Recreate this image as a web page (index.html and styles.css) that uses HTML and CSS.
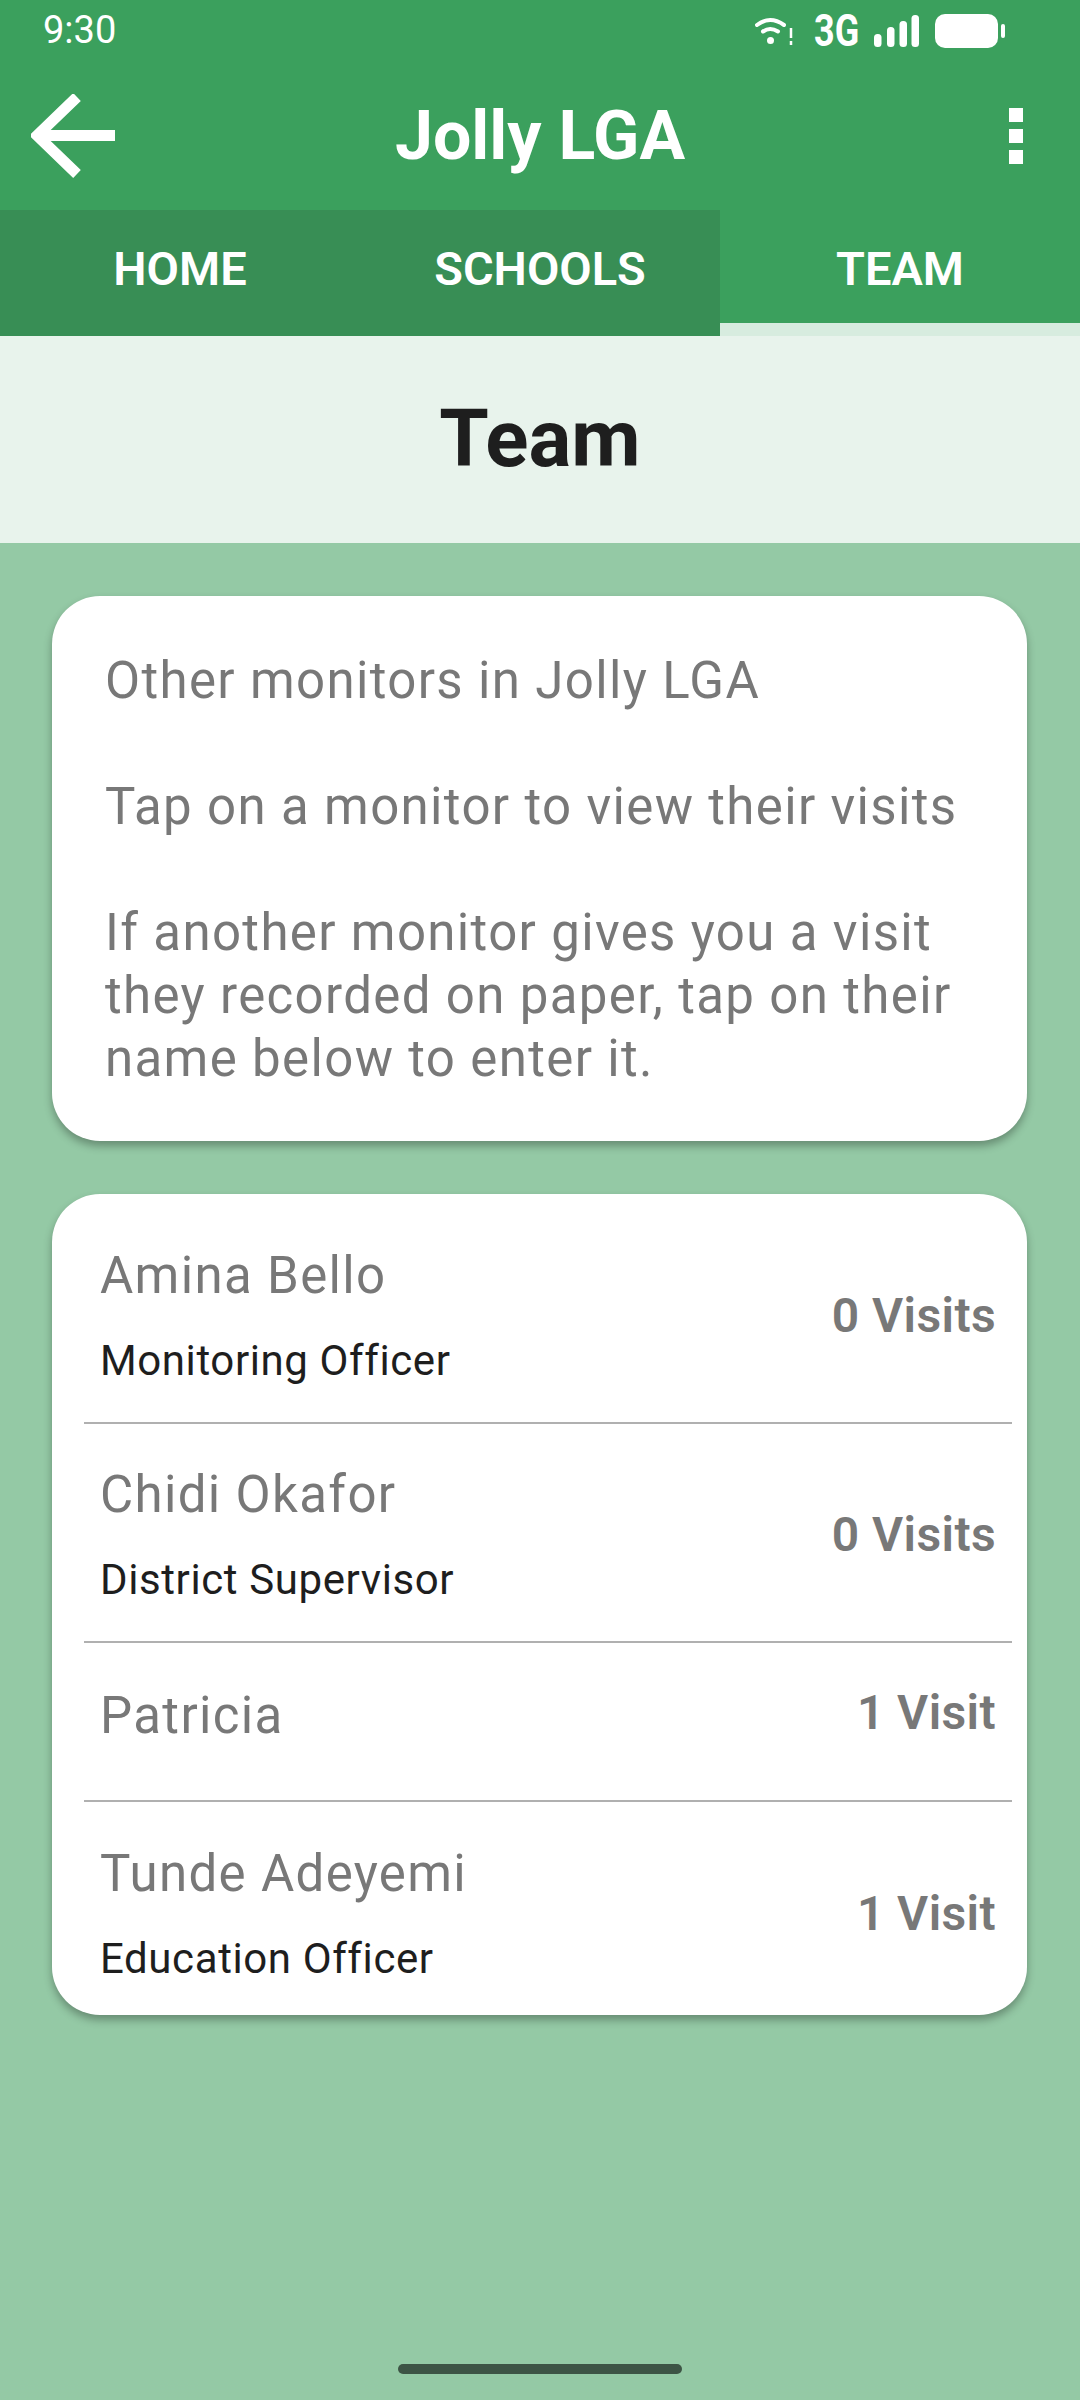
FILE: index.html
```html
<!DOCTYPE html>
<html lang="en">
<head>
    <meta charset="UTF-8">
    <title>Team</title>
    <link rel="stylesheet" href="styles.css">
</head>
<body>
    <div class="header">
        <div class="status-bar">
            <span class="time">9:30</span>
            <div class="status-icons">
                <svg class="wifi" width="38" height="28" viewBox="0 0 38 28">
                    <path d="M2 8 Q15 -2 29 8" fill="none" stroke="#fff" stroke-width="4" stroke-linecap="round"/>
                    <path d="M8 14.500 Q15 9.500 23 14.500" fill="none" stroke="#fff" stroke-width="4" stroke-linecap="round"/>
                    <circle cx="15.500" cy="23.500" r="3.500" fill="#fff"/>
                    <path d="M36 11 V21 M36 24 V28" stroke="#fff" stroke-width="2.500"/>
                </svg>
                <span class="network">3G</span>
                <svg class="signal" width="45" height="32" viewBox="0 0 45 32">
                    <rect x="0" y="19" width="7.500" height="13" rx="3.500" fill="#fff"/>
                    <rect x="13" y="12" width="7.500" height="20" rx="3.500" fill="#fff"/>
                    <rect x="25.500" y="6" width="7.500" height="26" rx="3.500" fill="#fff"/>
                    <rect x="37.500" y="0" width="7.500" height="32" rx="3.500" fill="#fff"/>
                </svg>
                <svg class="battery" width="70" height="34" viewBox="0 0 70 34">
                    <rect x="0" y="0" width="63" height="34" rx="10" fill="#fff"/>
                    <rect x="66" y="10" width="4" height="14" rx="2" fill="#fff"/>
                </svg>
            </div>
        </div>
        <div class="app-bar">
            <svg class="back" width="84" height="84" viewBox="0 0 84 84">
                <path d="M84 41.500 H6 M46 3 L6 41.500 L46 80" fill="none" stroke="#fff" stroke-width="11"/>
            </svg>
            <h1 class="app-title">Jolly LGA</h1>
            <div class="menu">
                <span></span>
                <span></span>
                <span></span>
            </div>
        </div>
        <div class="tabs">
            <div class="tab dim">HOME</div>
            <div class="tab dim">SCHOOLS</div>
            <div class="tab active">TEAM</div>
        </div>
    </div>
    <div class="page-title">Team</div>
    <div class="content">
        <div class="card intro">
            <p>Other monitors in Jolly LGA</p>
            <p>Tap on a monitor to view their visits</p>
            <p>If another monitor gives you a visit they recorded on paper, tap on their name below to enter it.</p>
        </div>
        <div class="card team">
            <div class="row first">
                <div class="person">
                    <div class="name">Amina Bello</div>
                    <div class="role">Monitoring Officer</div>
                </div>
                <div class="visits">0 Visits</div>
            </div>
            <div class="row">
                <div class="person">
                    <div class="name">Chidi Okafor</div>
                    <div class="role">District Supervisor</div>
                </div>
                <div class="visits">0 Visits</div>
            </div>
            <div class="row short">
                <div class="person">
                    <div class="name">Patricia</div>
                </div>
                <div class="visits">1 Visit</div>
            </div>
            <div class="row last">
                <div class="person">
                    <div class="name">Tunde Adeyemi</div>
                    <div class="role">Education Officer</div>
                </div>
                <div class="visits">1 Visit</div>
            </div>
        </div>
        <div class="home-bar"></div>
    </div>
</body>
</html>
```
FILE: styles.css
```css
* {
    padding: 0px;
    margin: 0px;
    box-sizing: border-box;
}
body {
    width: 1080px;
    height: 2400px;
    display: flex;
    flex-direction: column;
    font-family: Roboto, sans-serif;
    overflow: hidden;
}
.header {
    background-color: #3ba05d;
    color: #fff;
}
.status-bar {
    height: 60px;
    padding: 0px 75px 0px 43px;
    display: flex;
    justify-content: space-between;
    align-items: flex-start;
}
.time {
    font-size: 38px;
    line-height: 60px;
}
.status-icons {
    display: flex;
    align-items: center;
    gap: 16px;
    height: 62px;
}
.wifi {
    margin-right: 5px;
}
.network {
    display: inline-block;
    width: 44px;
    font-size: 45px;
    font-weight: 700;
    line-height: 44px;
    transform: scaleX(0.8);
    transform-origin: left center;
}
.app-bar {
    height: 150px;
    padding: 2px 31px 0px 31px;
    display: grid;
    grid-template-columns: 1fr auto 1fr;
    align-items: center;
}
.app-title {
    font-size: 68px;
    font-weight: 700;
    text-align: center;
}
.menu {
    justify-self: end;
    display: flex;
    flex-direction: column;
    gap: 7px;
    margin-right: 26px;
}
.menu span {
    display: block;
    width: 14px;
    height: 14px;
    background-color: #fff;
}
.tabs {
    display: flex;
    height: 126px;
}
.tab {
    width: 360px;
    text-align: center;
    font-size: 47px;
    font-weight: 600;
    line-height: 118px;
}
.tab.dim {
    background-color: #388e55;
}
.tab.active {
    border-bottom: 13px solid #d7ecdf;
}
.page-title {
    height: 207px;
    background-color: #e8f3ec;
    color: #1e1e1e;
    text-align: center;
    font-size: 80px;
    font-weight: 700;
    line-height: 207px;
}
.content {
    flex: 1;
    background-color: #94c9a5;
    padding: 53px 53px 0px 52px;
    position: relative;
}
.card {
    background-color: #fff;
    border-radius: 48px;
    box-shadow: 0px 5px 9px rgba(0, 0, 0, 0.3);
}
.intro {
    height: 545px;
    padding: 53px 50px 0px 53px;
    color: #787878;
    font-size: 51px;
    line-height: 63px;
    letter-spacing: 1.35px;
}
.intro p {
    margin-bottom: 63px;
}
.team {
    margin-top: 53px;
    height: 821px;
    padding: 0px 15px 0px 32px;
}
.row {
    height: 219px;
    padding: 39px 16px 0px 16px;
    display: flex;
    justify-content: space-between;
    align-items: flex-start;
    border-bottom: 2px solid #b0b0b0;
}
.row.first {
    height: 230px;
    padding-top: 50px;
}
.row.short {
    height: 159px;
    padding-top: 41px;
}
.row.last {
    height: 213px;
    padding-top: 40px;
    border-bottom: none;
}
.name {
    color: #787878;
    font-size: 51px;
    line-height: 63px;
    letter-spacing: 1.35px;
}
.role {
    margin-top: 33px;
    color: #1e1e1e;
    font-size: 42px;
    line-height: 42px;
    letter-spacing: 0.6px;
}
.visits {
    margin-top: 44px;
    color: #787878;
    font-size: 48px;
    font-weight: 600;
    line-height: 56px;
    letter-spacing: 0.4px;
}
.short .visits {
    margin-top: 1px;
}
.home-bar {
    position: absolute;
    left: 398px;
    bottom: 26px;
    width: 284px;
    height: 10px;
    border-radius: 5px;
    background-color: #3d5445;
}
```
